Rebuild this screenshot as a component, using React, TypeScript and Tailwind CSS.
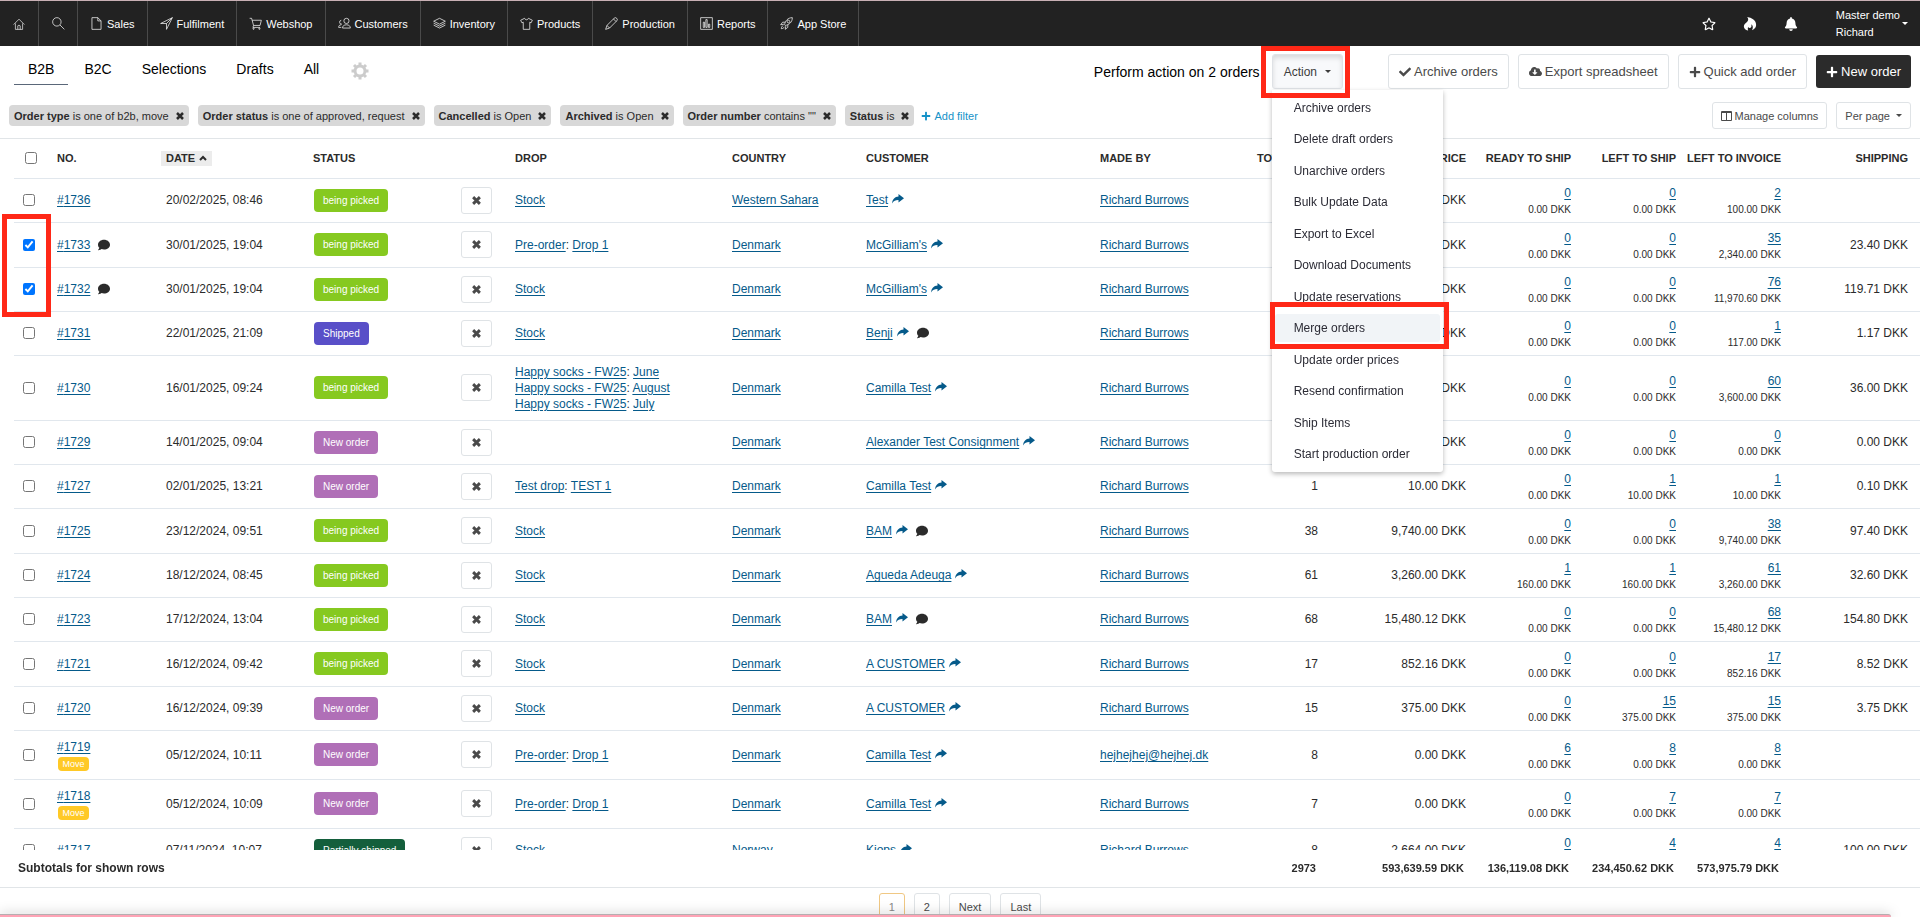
import React, { useState } from 'react';
import { FaBell, FaCheck, FaCloudDownloadAlt, FaComment, FaHotjar, FaPlus, FaRegStar } from 'react-icons/fa';

const navItems = [
  { label: 'Sales', icon: 'file' },
  { label: 'Fulfilment', icon: 'send' },
  { label: 'Webshop', icon: 'cart' },
  { label: 'Customers', icon: 'users' },
  { label: 'Inventory', icon: 'layers' },
  { label: 'Products', icon: 'shirt' },
  { label: 'Production', icon: 'pencil' },
  { label: 'Reports', icon: 'chart' },
  { label: 'App Store', icon: 'rocket' }
];

const iconPaths: Record<string, string> = {
  home: 'M1 11 10 2l9 9M4 9v10h12V9M8 19v-6q2-2 4 0v6',
  search: 'M7.5 1a6.5 6.5 0 1 0 0 13 6.5 6.5 0 0 0 0-13M12.3 12.3 19 19',
  file: 'M3 1h9l5 5v13H3zM12 1v5h5',
  send: 'M19 1 1 10h9v9zM10 10l9-9',
  cart: 'M1 2h3l3 11h10l2-8H5M7 13l-1 3h11M7 17a1 1 0 1 0 0 2 1 1 0 0 0 0-2M16 17a1 1 0 1 0 0 2 1 1 0 0 0 0-2',
  users: 'M13 2a4 4 0 1 0 0 8 4 4 0 0 0 0-8M7 17c0-3 2-5 6-5s6 2 6 5zM5 5a3 3 0 1 0 1 6M1 16c0-2 1-4 4-4M1 16h4',
  layers: 'M10 2 1 6.5l9 4.500 9-4.500zM1 9.500l9 4.500 9-4.500M1 12.500l9 4.500 9-4.500',
  shirt: 'M7 2 1 5l2 4 2-1v11h10V8l2 1 2-4-6-3c-1 3-5 3-6 0',
  pencil: 'M1 19l2-6L14 2q2-2 4 0t0 4L7 17zM3 13l4 4M13 3l4 4',
  chart: 'M1 1h18v18H1zM5 16V8h2v8zM9 16V4h2v12zM13 16v-5h2v5z',
  rocket: 'M7 12c1-6 5-11 12-11 0 7-5 11-11 12zM13 5a2 2 0 1 0 0 4 2 2 0 0 0 0-4M8 8H4l-3 4 5-1M12 12v4l-4 3 1-5M5 13c-2 1-3 3-3 5 2 0 4-1 5-3'
};

const tabs = ['B2B', 'B2C', 'Selections', 'Drafts', 'All'];

const filters = [
  { name: 'Order type', value: 'is one of b2b, move' },
  { name: 'Order status', value: 'is one of approved, request' },
  { name: 'Cancelled', value: 'is Open' },
  { name: 'Archived', value: 'is Open' },
  { name: 'Order number', value: 'contains ""' },
  { name: 'Status', value: 'is' }
];

const actions = [
  'Archive orders',
  'Delete draft orders',
  'Unarchive orders',
  'Bulk Update Data',
  'Export to Excel',
  'Download Documents',
  'Update reservations',
  'Merge orders',
  'Update order prices',
  'Resend confirmation',
  'Ship Items',
  'Start production order'
];

const statusColors: Record<string, string> = {
  'being picked': 'bg-[#86c920]',
  Shipped: 'bg-[#594fc8]',
  'New order': 'bg-[#b06fb7]',
  'Partially shipped': 'bg-[#145f3c]'
};

type Order = {
  no: number;
  date: string;
  status: string;
  drops: string[][];
  country: string;
  customer: string;
  madeBy?: string;
  total: number;
  price: string;
  // quantity and amount for ready to ship, left to ship, left to invoice
  left: [number, string][];
  shipping?: string;
  noteOnOrder?: boolean;
  noteOnCustomer?: boolean;
  move?: boolean;
};

const stock = [['Stock']];
const none: [number, string] = [0, '0.00'];

const orders: Order[] = [
  { no: 1736, date: '20/02/2025, 08:46', status: 'being picked', drops: stock, country: 'Western Sahara', customer: 'Test', total: 2, price: '100.00', left: [none, none, [2, '100.00']] },
  { no: 1733, date: '30/01/2025, 19:04', status: 'being picked', drops: [['Pre-order', 'Drop 1']], country: 'Denmark', customer: "McGilliam's", total: 35, price: '2,340.00', left: [none, none, [35, '2,340.00']], shipping: '23.40', noteOnOrder: true },
  { no: 1732, date: '30/01/2025, 19:04', status: 'being picked', drops: stock, country: 'Denmark', customer: "McGilliam's", total: 76, price: '11,970.60', left: [none, none, [76, '11,970.60']], shipping: '119.71', noteOnOrder: true },
  { no: 1731, date: '22/01/2025, 21:09', status: 'Shipped', drops: stock, country: 'Denmark', customer: 'Benji', total: 1, price: '117.00', left: [none, none, [1, '117.00']], shipping: '1.17', noteOnCustomer: true },
  { no: 1730, date: '16/01/2025, 09:24', status: 'being picked', drops: [['Happy socks - FW25', 'June'], ['Happy socks - FW25', 'August'], ['Happy socks - FW25', 'July']], country: 'Denmark', customer: 'Camilla Test', total: 60, price: '3,600.00', left: [none, none, [60, '3,600.00']], shipping: '36.00' },
  { no: 1729, date: '14/01/2025, 09:04', status: 'New order', drops: [], country: 'Denmark', customer: 'Alexander Test Consignment', total: 0, price: '0.00', left: [none, none, none], shipping: '0.00' },
  { no: 1727, date: '02/01/2025, 13:21', status: 'New order', drops: [['Test drop', 'TEST 1']], country: 'Denmark', customer: 'Camilla Test', total: 1, price: '10.00', left: [none, [1, '10.00'], [1, '10.00']], shipping: '0.10' },
  { no: 1725, date: '23/12/2024, 09:51', status: 'being picked', drops: stock, country: 'Denmark', customer: 'BAM', total: 38, price: '9,740.00', left: [none, none, [38, '9,740.00']], shipping: '97.40', noteOnCustomer: true },
  { no: 1724, date: '18/12/2024, 08:45', status: 'being picked', drops: stock, country: 'Denmark', customer: 'Agueda Adeuga', total: 61, price: '3,260.00', left: [[1, '160.00'], [1, '160.00'], [61, '3,260.00']], shipping: '32.60' },
  { no: 1723, date: '17/12/2024, 13:04', status: 'being picked', drops: stock, country: 'Denmark', customer: 'BAM', total: 68, price: '15,480.12', left: [none, none, [68, '15,480.12']], shipping: '154.80', noteOnCustomer: true },
  { no: 1721, date: '16/12/2024, 09:42', status: 'being picked', drops: stock, country: 'Denmark', customer: 'A CUSTOMER', total: 17, price: '852.16', left: [none, none, [17, '852.16']], shipping: '8.52' },
  { no: 1720, date: '16/12/2024, 09:39', status: 'New order', drops: stock, country: 'Denmark', customer: 'A CUSTOMER', total: 15, price: '375.00', left: [none, [15, '375.00'], [15, '375.00']], shipping: '3.75' },
  { no: 1719, date: '05/12/2024, 10:11', status: 'New order', drops: [['Pre-order', 'Drop 1']], country: 'Denmark', customer: 'Camilla Test', madeBy: 'hejhejhej@hejhej.dk', total: 8, price: '0.00', left: [[6, '0.00'], [8, '0.00'], [8, '0.00']], move: true },
  { no: 1718, date: '05/12/2024, 10:09', status: 'New order', drops: [['Pre-order', 'Drop 1']], country: 'Denmark', customer: 'Camilla Test', total: 7, price: '0.00', left: [none, [7, '0.00'], [7, '0.00']], move: true },
  { no: 1717, date: '07/11/2024, 10:07', status: 'Partially shipped', drops: stock, country: 'Norway', customer: 'Kiops', total: 8, price: '2,664.00', left: [none, [4, '1,332.00'], [4, '1,332.00']], shipping: '100.00' }
];

function LineIcon({ name, className = 'size-3' }: { name: string; className?: string }) {
  return (
    <svg viewBox="0 0 20 20" className={`${className} shrink-0`} fill="none" stroke="currentColor" strokeWidth="1.1" aria-hidden="true">
      <path d={iconPaths[name]} />
    </svg>
  );
}

function Cross({ className = 'size-2' }: { className?: string }) {
  return (
    <svg viewBox="0 0 12 12" className={`${className} shrink-0`} stroke="currentColor" strokeWidth="3.800" aria-hidden="true">
      <path d="M1.500 1.500 10.500 10.500M10.500 1.500 1.500 10.500" />
    </svg>
  );
}

function Caret() {
  return (
    <svg viewBox="0 0 6 3" className="h-[3px] w-1.5 shrink-0" fill="currentColor" aria-hidden="true">
      <path d="M0 0h6L3 3z" />
    </svg>
  );
}

function ShareArrow() {
  return (
    <svg viewBox="0 0 12 10" className="mb-0.5 ml-1 h-2.5 w-3 shrink-0 text-[#055a8a]" fill="currentColor" aria-hidden="true">
      <path d="M6.500 0 12 4.200 6.500 8.400V6C3.800 5.900 1.700 6.800 0 9.400.500 5.200 2.800 2.800 6.500 2.500z" />
    </svg>
  );
}

function Gear() {
  return (
    <svg viewBox="0 0 18 18" className="size-[18px]" fill="none" stroke="currentColor" aria-hidden="true">
      <circle cx="9" cy="9" r="5" strokeWidth="3" />
      <path strokeWidth="3" d="M9 .5v3M9 14.500v3M.5 9h3M14.500 9h3M3 3l2 2M13 13l2 2M3 15l2-2M13 5l2-2" />
    </svg>
  );
}

function Link({ children }: { children: React.ReactNode }) {
  return (
    <a href="#" className="text-[#055a8a] underline underline-offset-2">
      {children}
    </a>
  );
}

function TopNav() {
  return (
    <header className="flex shrink-0 border-t border-[#c9b0b5] bg-[#222] text-[11px] text-white">
      <nav className="flex h-[45px]">
        <a href="#" aria-label="Home" className="flex w-[39px] items-center justify-center border-r border-[#4a4a4a]">
          <LineIcon name="home" />
        </a>
        <button aria-label="Search" className="flex w-[39px] items-center justify-center border-r border-[#4a4a4a]">
          <LineIcon name="search" className="size-[13px]" />
        </button>
        {navItems.map((item) => (
          <a key={item.label} href="#" className="flex items-center gap-1 border-r border-[#4a4a4a] px-3">
            <LineIcon name={item.icon} className="size-[13px]" />
            {item.label}
          </a>
        ))}
      </nav>
      <div className="ml-auto flex items-center pr-3">
        <button aria-label="Favourites" className="w-[41px]"><FaRegStar className="mx-auto size-[14px]" /></button>
        <button aria-label="News" className="w-[41px]"><FaHotjar className="mx-auto size-[14px]" /></button>
        <button aria-label="Notifications" className="w-[41px]"><FaBell className="mx-auto size-[14px]" /></button>
        <button className="ml-6 flex items-center gap-0.5 text-left leading-[17px]">
          <span>
            Master demo
            <br />
            Richard
          </span>
          <Caret />
        </button>
      </div>
    </header>
  );
}

function ActionMenu({ count }: { count: number }) {
  const [open, setOpen] = useState(true);

  return (
    <div className="mr-9 flex items-center">
      <span className="mr-3 text-sm leading-5 text-black">Perform action on {count} orders</span>
      <div className="relative">
        <button
          onClick={() => setOpen(!open)}
          className="flex h-[35px] items-center gap-2 rounded-[3px] border border-[#dfe2e6] bg-[#f8f9fb] px-[11px] text-xs text-[#3c3c3c] shadow-[inset_0_3px_5px_rgba(0,0,0,0.125)]"
        >
          Action
          <Caret />
        </button>
        <span className="pointer-events-none absolute -top-2 -right-[7px] -bottom-[9px] -left-[11px] z-30 border-5 border-[#ff2817]" />
        {open && (
          <ul className="absolute top-full left-0 z-20 mt-px flex h-[382px] w-[171px] flex-col justify-between rounded-b-[3px] bg-white px-[3px] py-1 shadow-[0_2px_5px_rgba(0,0,0,0.28)]">
            {actions.map((action) => (
              <li key={action} className="relative">
                <button
                  className={`block h-7 w-full rounded-[3px] pl-[19px] text-left text-xs text-[#2b2b35] ${
                    action === 'Merge orders' ? 'bg-[#f1f4f7]' : ''
                  }`}
                >
                  {action}
                </button>
                {action === 'Merge orders' && (
                  <span className="pointer-events-none absolute -top-3 -right-[9px] -bottom-[7px] -left-[5px] border-5 border-[#ff2817]" />
                )}
              </li>
            ))}
          </ul>
        )}
      </div>
    </div>
  );
}

function OrderRow({ order, checked, onToggle }: { order: Order; checked: boolean; onToggle: () => void }) {
  return (
    <tr className={`border-b border-[#e1e7ed] ${order.move ? 'h-[49px]' : order.drops.length > 1 ? 'h-[65px]' : 'h-11 nth-[3n+2]:h-[45px]'}`}>
      <td className="relative pl-[9px]">
        <input type="checkbox" aria-label={`Select order ${order.no}`} checked={checked} onChange={onToggle} className="block size-3 accent-[#0075ff]" />
        {order.no === 1733 && (
          <span className="pointer-events-none absolute -top-[9px] -right-0.5 -left-3 z-10 h-[103px] border-5 border-[#ff2817]" />
        )}
      </td>
      <td className="px-2">
        <div className="flex items-center gap-2">
          <Link>#{order.no}</Link>
          {order.noteOnOrder && <FaComment className="size-3 text-[#2b2b2b]" />}
        </div>
        {order.move && <span className="mt-0.5 ml-px block h-3.5 w-[31px] rounded bg-[#ffc926] text-center text-[9px] leading-3.5 text-white">Move</span>}
      </td>
      <td className="px-2">{order.date}</td>
      <td className="px-2">
        <span className={`ml-px inline-block h-[23px] rounded px-[9px] text-[10px] leading-[23px] text-white ${statusColors[order.status]}`}>
          {order.status}
        </span>
      </td>
      <td className="px-2">
        <button aria-label={`Cancel order ${order.no}`} className="flex h-[27px] w-[31px] items-center justify-center rounded-[3px] border border-[#dfe3e6] text-[#4a4a4a]">
          <Cross className="size-[9px]" />
        </button>
      </td>
      <td className="px-2">
        {order.drops.map((drop) => (
          <div key={drop.join()}>
            <Link>{drop[0]}</Link>
            {drop[1] && (
              <>
                : <Link>{drop[1]}</Link>
              </>
            )}
          </div>
        ))}
      </td>
      <td className="px-2">
        <Link>{order.country}</Link>
      </td>
      <td className="px-2">
        <div className="flex items-center">
          <Link>{order.customer}</Link>
          <ShareArrow />
          {order.noteOnCustomer && <FaComment className="ml-2 size-3 text-[#2b2b2b]" />}
        </div>
      </td>
      <td className="px-2">
        <Link>{order.madeBy ?? 'Richard Burrows'}</Link>
      </td>
      <td className="px-2 text-right">{order.total}</td>
      <td className="px-2 text-right">{order.price} DKK</td>
      {order.left.map(([qty, amount], i) => (
        <td key={i} className="px-2 pt-0.5 text-right">
          <div className="leading-[18px]">
            <Link>{qty}</Link>
          </div>
          <div className="text-[10px] leading-4">{amount} DKK</div>
        </td>
      ))}
      <td className="pr-3 text-right">{order.shipping && `${order.shipping} DKK`}</td>
    </tr>
  );
}

export default function App() {
  const [selected, setSelected] = useState([1733, 1732]);

  const toggle = (no: number) =>
    setSelected(selected.includes(no) ? selected.filter((n) => n !== no) : [...selected, no]);

  const toolButton = 'flex h-[35px] items-center gap-[3px] rounded-[3px] border border-[#dfe3e6] bg-white px-2.5 text-[#4a4a4a]';
  const smallButton = 'flex h-[27px] items-center rounded-[3px] border border-[#dfe3e6] px-2 text-[11px] text-[#4a4a4a]';

  return (
    <div className="relative flex h-screen flex-col overflow-hidden bg-white font-['Liberation_Sans',Arial,sans-serif] text-xs leading-4 text-[#2b2b2b]">
      <TopNav />

      <div className="flex shrink-0 justify-between pt-2 pr-[9px] pl-3.5">
        <div className="flex items-start gap-0.5">
          {tabs.map((tab) => (
            <a
              key={tab}
              href="#"
              className={`border-b px-3.5 pt-[5px] pb-[5px] text-sm leading-5 text-black ${tab === 'B2B' ? 'border-[#5a6779]' : 'border-transparent'}`}
            >
              {tab}
            </a>
          ))}
          <button aria-label="Settings" className="mt-2 ml-4 text-[#ccc]">
            <Gear />
          </button>
        </div>
        <div className="flex items-center gap-[9px] text-[13px]">
          <ActionMenu count={selected.length} />
          <button className={toolButton}><FaCheck className="size-3" />Archive orders</button>
          <button className={toolButton}><FaCloudDownloadAlt className="size-[13px]" />Export spreadsheet</button>
          <button className={toolButton}><FaPlus className="size-3" />Quick add order</button>
          <button className="flex h-[33px] items-center gap-[3px] rounded-[3px] bg-[#2b2b2b] px-2.5 text-white"><FaPlus className="size-3" />New order</button>
        </div>
      </div>

      <div className="flex shrink-0 items-center justify-between border-b border-[#e1e5e8] pt-[13px] pr-[9px] pb-[9px] pl-[9px]">
        <div className="flex items-center gap-[9px] text-[11px]">
          {filters.map((filter) => (
            <span key={filter.name} className="flex h-[21px] items-center rounded-[4px] bg-[#d8d8d8] px-[5px]">
              <b>{filter.name}</b>&nbsp;{filter.value}
              <button aria-label={`Remove ${filter.name}`} className="ml-[7px]">
                <Cross />
              </button>
            </span>
          ))}
          <button className="-ml-0.5 flex items-center gap-[3px] text-[#1592c8]">
            <FaPlus className="size-2.5" />
            Add filter
          </button>
        </div>
        <div className="flex gap-[9px]">
          <button className={`${smallButton} gap-[3px]`}>
            <svg viewBox="0 0 11 10" className="h-2.5 w-[11px]" fill="none" stroke="currentColor" aria-hidden="true">
              <path d="M.5.5h10v9H.5zM5.500 1v8M1 1.500h9" />
            </svg>
            Manage columns
          </button>
          <button className={`${smallButton} gap-1.5`}>
            Per page
            <Caret />
          </button>
        </div>
      </div>

      <div className="min-h-0 flex-1 overflow-hidden border-b border-[#e1e5e8] pl-3.5">
        <table className="w-full table-fixed border-collapse">
          <colgroup>
            <col className="w-[35px]" />
            <col className="w-[109px]" />
            <col className="w-[147px]" />
            <col className="w-[148px]" />
            <col className="w-[54px]" />
            <col className="w-[217px]" />
            <col className="w-[134px]" />
            <col className="w-[234px]" />
            <col className="w-[132px]" />
            <col className="w-[102px]" />
            <col className="w-[148px]" />
            <col className="w-[105px]" />
            <col className="w-[105px]" />
            <col className="w-[105px]" />
            <col className="w-[131px]" />
          </colgroup>
          <thead className="text-left text-[11px]">
            <tr className="h-[39px] border-b border-[#e1e7ed]">
              <th className="pl-[11px]">
                <input type="checkbox" aria-label="Select all orders" className="block size-3" />
              </th>
              <th className="px-2">NO.</th>
              <th className="px-[3px]">
                <button className="flex h-[15px] items-center gap-1 bg-[#ececec] px-[5px] font-bold">
                  DATE
                  <svg viewBox="0 0 8 6" className="h-1.5 w-2" fill="none" stroke="currentColor" strokeWidth="2" aria-hidden="true">
                    <path d="M1 5l3-3 3 3" />
                  </svg>
                </button>
              </th>
              <th className="px-2">STATUS</th>
              <th></th>
              <th className="px-2">DROP</th>
              <th className="px-2">COUNTRY</th>
              <th className="px-2">CUSTOMER</th>
              <th className="px-2">MADE BY</th>
              <th className="px-2 text-right whitespace-nowrap">TOTAL QTY</th>
              <th className="px-2 text-right">PRICE</th>
              <th className="px-2 text-right whitespace-nowrap">READY TO SHIP</th>
              <th className="px-2 text-right whitespace-nowrap">LEFT TO SHIP</th>
              <th className="pr-2 text-right whitespace-nowrap">LEFT TO INVOICE</th>
              <th className="pr-3 text-right">SHIPPING</th>
            </tr>
          </thead>
          <tbody>
            {orders.map((order) => (
              <OrderRow key={order.no} order={order} checked={selected.includes(order.no)} onToggle={() => toggle(order.no)} />
            ))}
          </tbody>
          <tfoot className="sticky bottom-0 bg-white text-[11px] font-bold">
            <tr className="h-[38px]">
              <td colSpan={9} className="pl-1 text-xs">Subtotals for shown rows</td>
              <td className="pr-2.5 text-right">2973</td>
              <td className="pr-2.5 text-right">593,639.59 DKK</td>
              <td className="pr-2.5 text-right">136,119.08 DKK</td>
              <td className="pr-2.5 text-right">234,450.62 DKK</td>
              <td className="pr-2.5 text-right">573,975.79 DKK</td>
              <td></td>
            </tr>
          </tfoot>
        </table>
      </div>

      <div className="flex h-[29px] shrink-0 items-start justify-center gap-[9px] overflow-hidden pt-[5px] text-[11px] text-[#4a4a4a]">
        <button className="h-[27px] w-[26px] shrink-0 rounded-[3px] border border-[#f0c884] text-[#888]">1</button>
        <button className="h-[27px] w-[26px] shrink-0 rounded-[3px] border border-[#dfe3e6]">2</button>
        <button className="h-[27px] shrink-0 rounded-[3px] border border-[#dfe3e6] px-[9px]">Next</button>
        <button className="h-[27px] shrink-0 rounded-[3px] border border-[#dfe3e6] px-[9px]">Last</button>
      </div>

      <div className="absolute bottom-0 left-0 h-[3px] w-[98.5%] rounded-tr-[4px] border-t border-[#b5aeb0] bg-[#ffa3b5] shadow-[0_0_12px_rgba(0,0,0,0.35)]" />
    </div>
  );
}
